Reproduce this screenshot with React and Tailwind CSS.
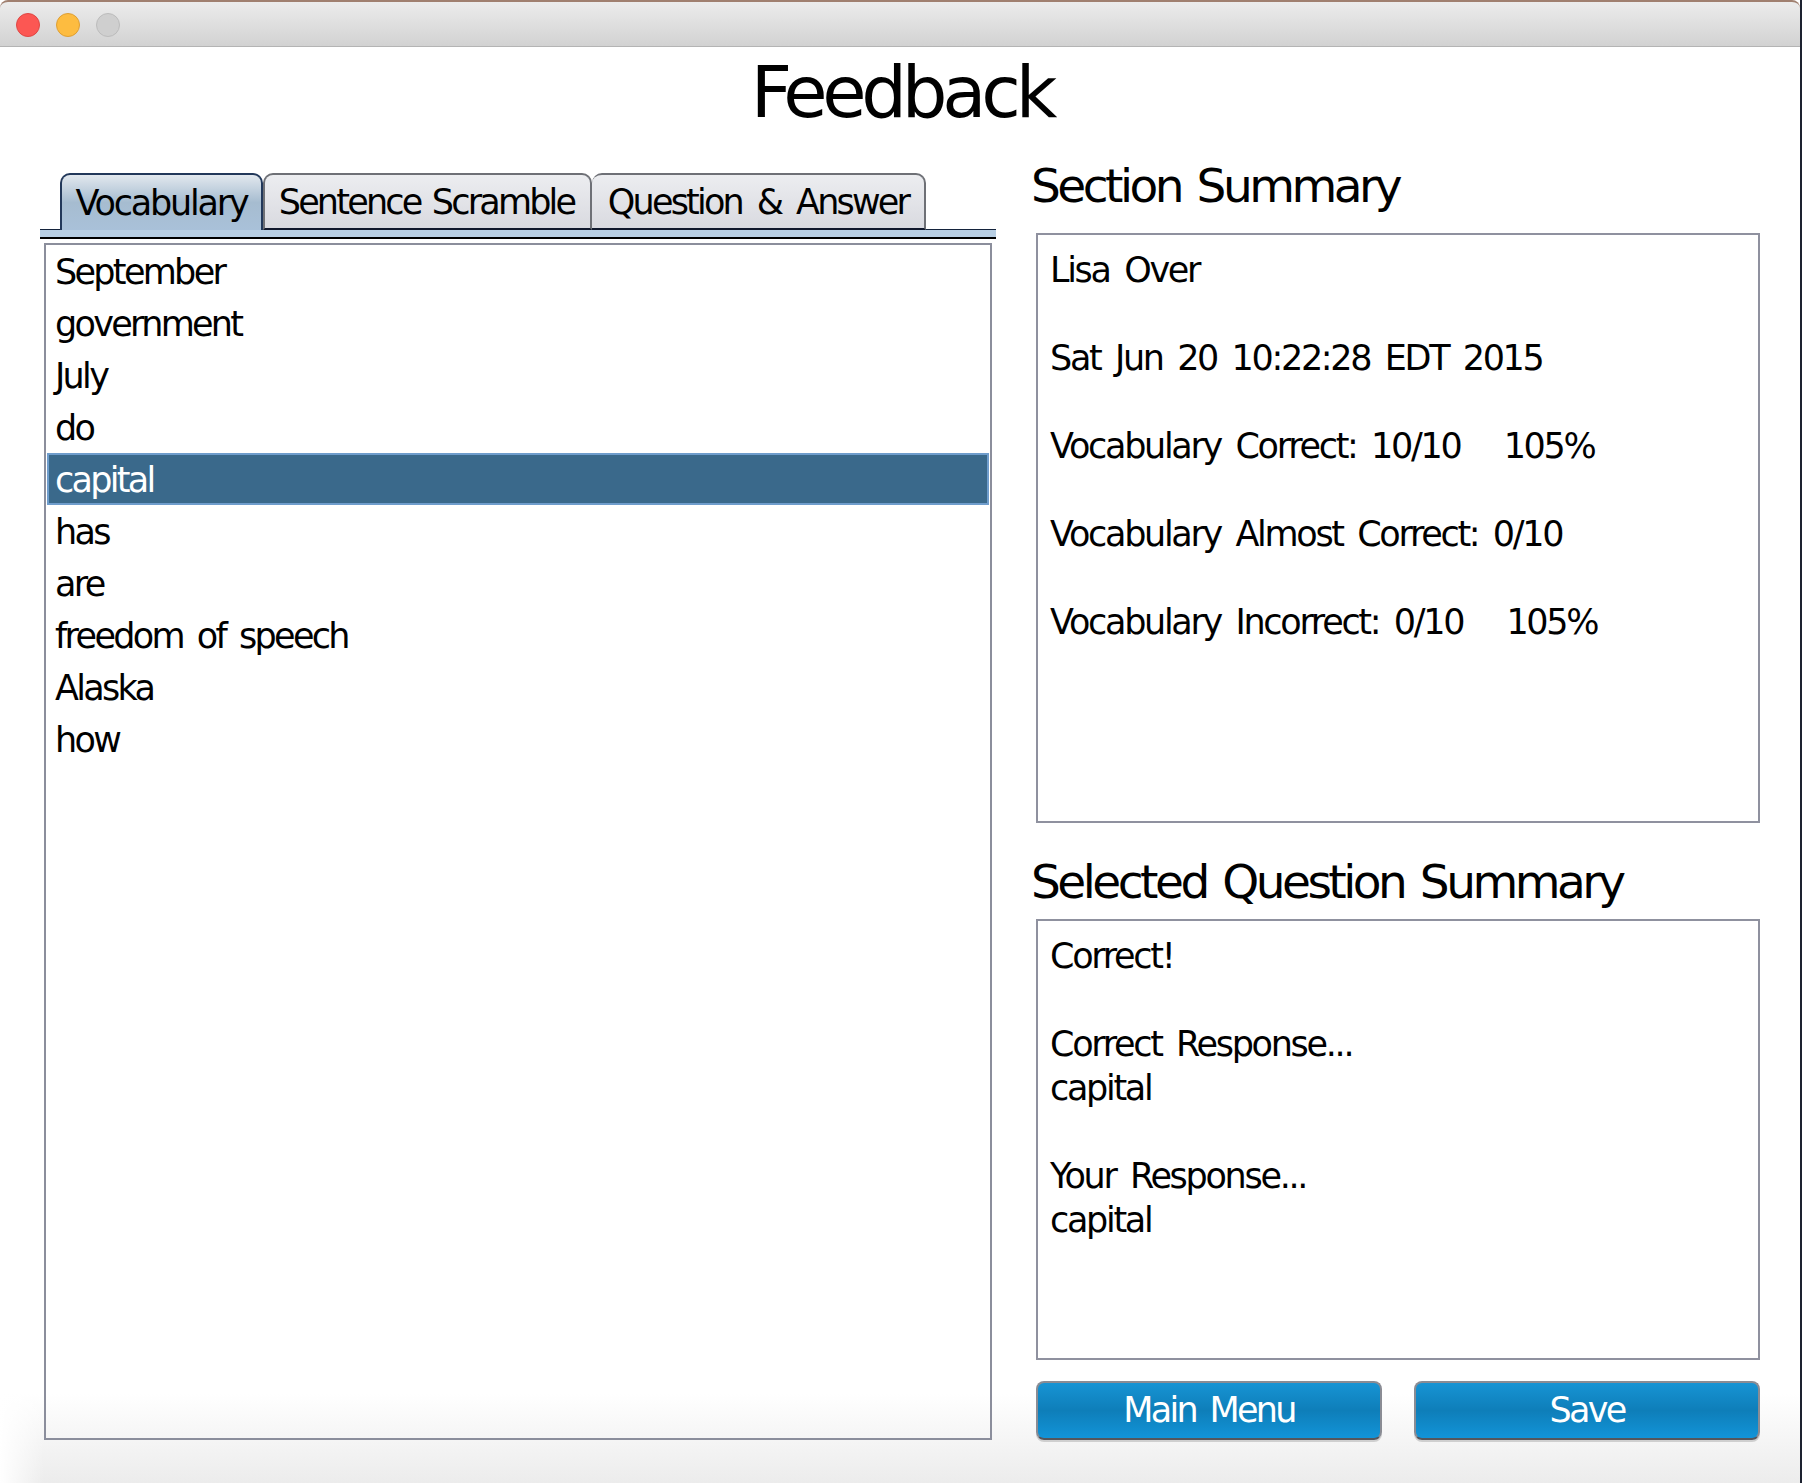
const FONT = "font-['DejaVu_Sans',sans-serif]";

const words = ["September", "government", "July", "do", "capital", "has", "are", "freedom of speech", "Alaska", "how"];
const tabs = ["Sentence Scramble", "Question & Answer"];

function TitleBar() {
  return (
    <div className="h-[47px] shrink-0 flex items-center gap-[16px] pl-[16px] pt-[2px] rounded-t-[8px] border-t-2 border-t-[#a08070] border-b border-b-[#b4b4b4] bg-gradient-to-b from-[#ececec] to-[#d2d2d2]">
      <span className="w-[24px] h-[24px] rounded-full bg-[#fc5753] border border-[#df4744]" />
      <span className="w-[24px] h-[24px] rounded-full bg-[#fdbc40] border border-[#de9f34]" />
      <span className="w-[24px] h-[24px] rounded-full bg-[#cfcfcf] border border-[#bcbcbc]" />
    </div>
  );
}

function TabStrip() {
  return (
    <div className="relative w-[956px] h-[66px] ml-[40px]">
      <div className="flex items-end h-[56px] pl-[20px] border-b border-b-[#14233c]">
        <div className="relative z-10 h-[57px] -mb-[1px] w-[203px] flex items-center justify-center pt-[2px] rounded-t-[10px] border-2 border-b-0 border-[#22385a] bg-gradient-to-b from-[#e2e8ee] via-[#a6bcd0] to-[#a9c1d9] text-[35px] tracking-[-2.2px] text-black">
          Vocabulary
        </div>
        <div className="h-[57px] -mb-[1px] w-[329px] flex items-center justify-center pt-[2px] pr-[2px] rounded-t-[10px] border-2 border-[#6e7076] border-b-[#10182c] bg-gradient-to-b from-[#ecedf0] to-[#d9dae0] text-[35px] tracking-[-2.8px] [word-spacing:3px] text-black">
          {tabs[0]}
        </div>
        <div className="h-[57px] -mb-[1px] w-[334px] flex items-center justify-center pt-[2px] rounded-t-[10px] border-2 border-l-0 border-[#6e7076] border-b-[#10182c] bg-gradient-to-b from-[#ecedf0] to-[#d9dae0] text-[35px] tracking-[-2.8px] [word-spacing:6.5px] text-black">
          {tabs[1]}
        </div>
      </div>
      <div className="h-[9px] bg-[#b8cfe4] border-b-2 border-b-black" />
    </div>
  );
}

function WordList() {
  return (
    <div className="w-[948px] h-[1197px] mt-[3px] ml-[44px] border-2 border-[#8b8e9c] px-[1px]">
      {words.map((w) => (
        <div
          key={w}
          className={
            w === "capital"
              ? "h-[52px] flex items-center pl-[6px] pt-[3px] text-[35px] tracking-[-2.7px] [word-spacing:5.5px] text-white bg-[#3a698b] border-2 border-[#6f9dcc]"
              : "h-[52px] flex items-center pl-[8px] pt-[3px] text-[35px] tracking-[-2.7px] [word-spacing:5.5px] text-black"
          }
        >
          {w}
        </div>
      ))}
    </div>
  );
}

function Heading({ children, className }) {
  return <h2 className={"text-[47px] leading-[60px] tracking-[-3.5px] [word-spacing:4px] text-black -ml-[5px] " + className}>{children}</h2>;
}

function SummaryBox({ lines, className }) {
  return (
    <div className={"w-[724px] border-2 border-[#8f919f] pl-[12px] pt-[13px] text-[35px] leading-[44px] tracking-[-2.3px] [word-spacing:5.6px] text-black " + className}>
      {lines.map((l, i) => (
        <div key={i} className="h-[44px] whitespace-pre">{l}</div>
      ))}
    </div>
  );
}

function BlueButton({ children }) {
  return (
    <button className="w-[346px] h-[59px] rounded-[8px] border-2 border-[#8a8c94] border-b-[#55565c] bg-gradient-to-b from-[#1794d4] via-[#0e7eb9] to-[#1294d8] text-white text-[35px] tracking-[-2.7px] [word-spacing:5px] shadow-[0_2px_0_#cfcfcf]">
      {children}
    </button>
  );
}

export default function App() {
  return (
    <div className={"relative w-[1802px] h-[1483px] flex flex-col overflow-hidden bg-gradient-to-b from-white from-[94%] to-[#ececec] border-r-2 border-r-[#1d2230] " + FONT}>
      <TitleBar />
      <h1 className="h-[80px] mt-[5px] pl-[3px] text-center text-[72px] leading-[80px] tracking-[-5.2px] text-black">Feedback</h1>
      <div className="flex">
        <div className="w-[1036px] shrink-0 pt-[42px]">
          <TabStrip />
          <WordList />
        </div>
        <div className="flex flex-col pt-[24px]">
          <Heading>Section Summary</Heading>
          <SummaryBox
            className="h-[590px] mt-[17px]"
            lines={[
              "Lisa Over",
              "",
              "Sat Jun 20 10:22:28 EDT 2015",
              "",
              "Vocabulary Correct: 10/10   105%",
              "",
              "Vocabulary Almost Correct: 0/10",
              "",
              "Vocabulary Incorrect: 0/10   105%",
            ]}
          />
          <Heading className="mt-[29px]">Selected Question Summary</Heading>
          <SummaryBox
            className="h-[441px] mt-[7px]"
            lines={["Correct!", "", "Correct Response...", "capital", "", "Your Response...", "capital"]}
          />
          <div className="flex gap-[32px] mt-[21px]">
            <BlueButton>Main Menu</BlueButton>
            <BlueButton>Save</BlueButton>
          </div>
        </div>
      </div>
      {/* window shadow fades out at the lower left corner */}
      <div className="absolute left-0 bottom-0 w-[44px] h-[90px] bg-gradient-to-r from-white to-transparent" />
    </div>
  );
}
